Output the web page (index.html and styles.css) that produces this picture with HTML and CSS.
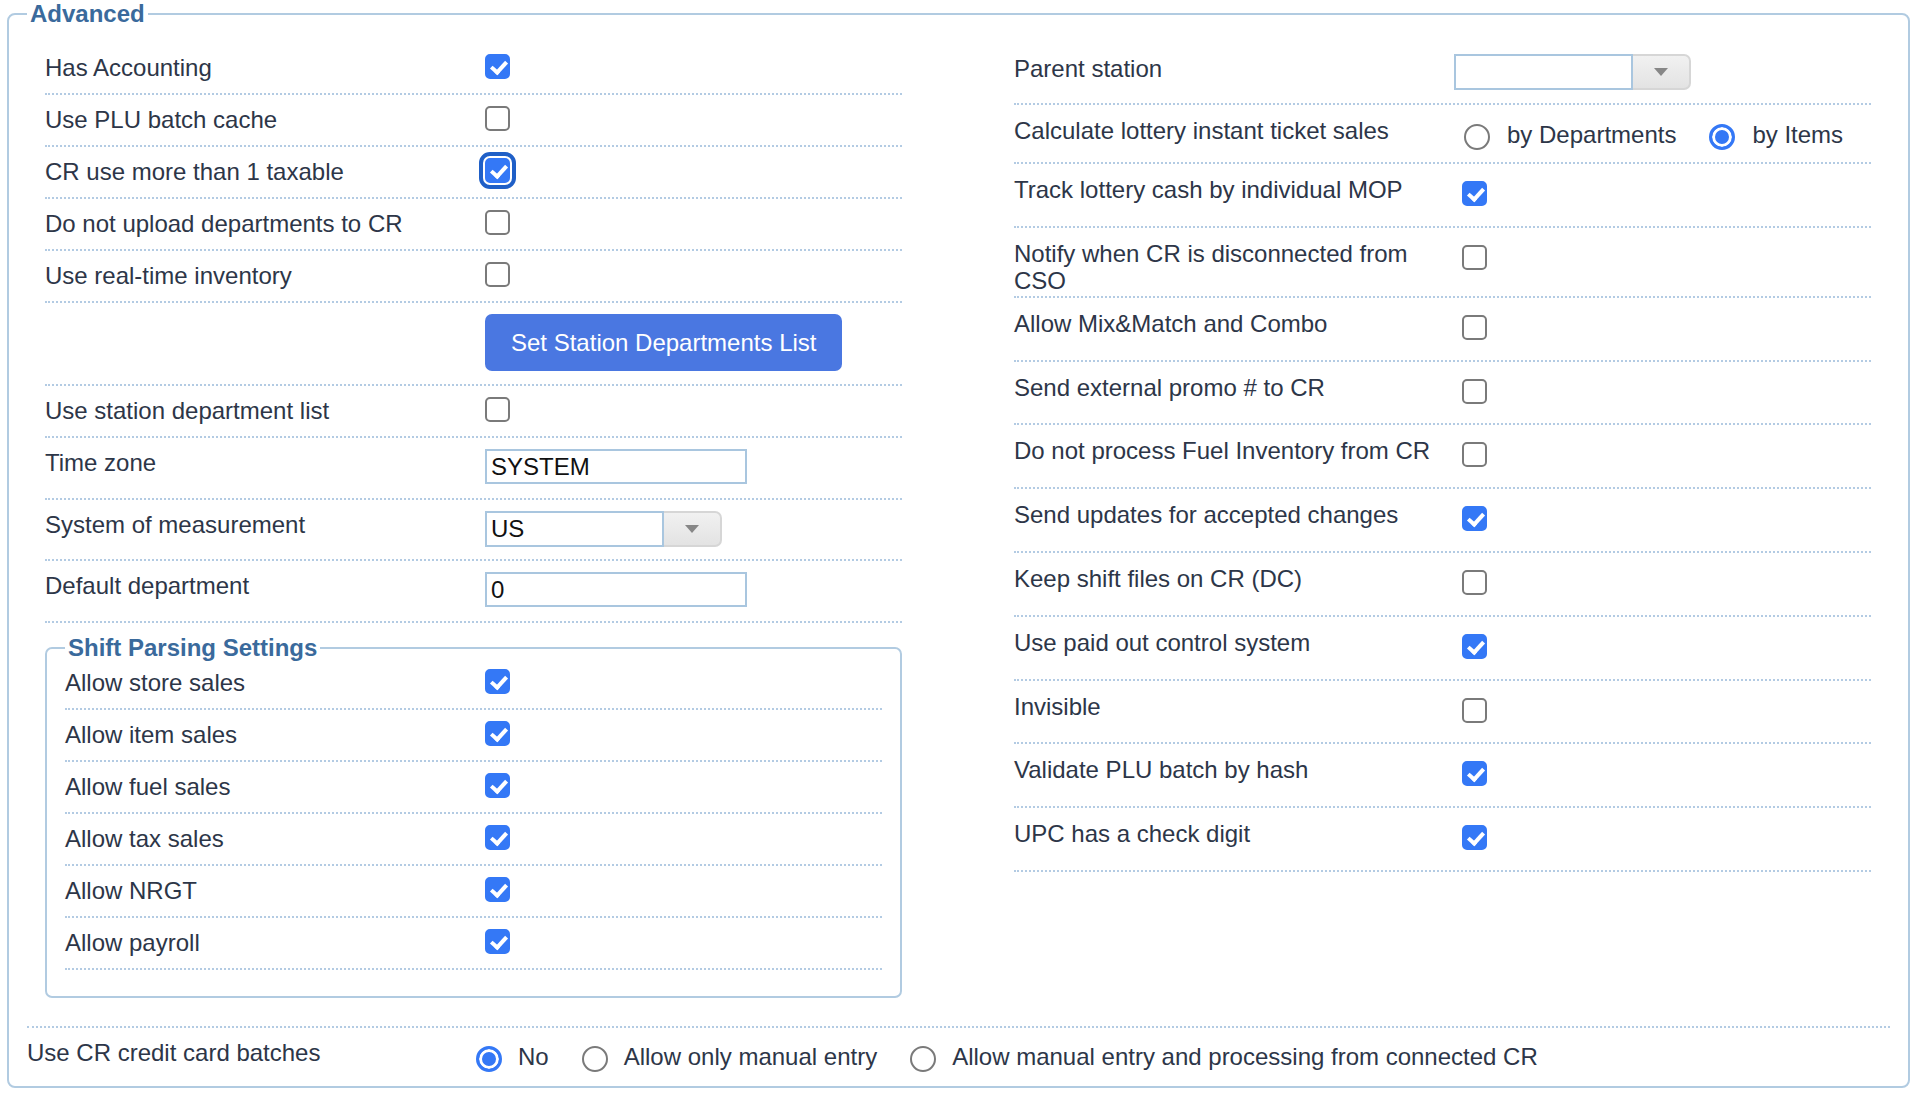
FILE: index.html
```html
<!DOCTYPE html>
<html lang="en">
<head>
<meta charset="utf-8">
<title>Advanced</title>
<link rel="stylesheet" href="styles.css">
</head>
<body>
<fieldset class="adv">
  <legend>Advanced</legend>
  <div class="cols">
    <div class="col">
      <div class="row"><span class="lbl">Has Accounting</span><input type="checkbox" class="cb" checked></div>
      <div class="row"><span class="lbl">Use PLU batch cache</span><input type="checkbox" class="cb"></div>
      <div class="row"><span class="lbl">CR use more than 1 taxable</span><input type="checkbox" class="cb focus" checked></div>
      <div class="row"><span class="lbl">Do not upload departments to CR</span><input type="checkbox" class="cb"></div>
      <div class="row"><span class="lbl">Use real-time inventory</span><input type="checkbox" class="cb"></div>
      <div class="row btnrow"><span class="lbl"></span><button class="btn" type="button">Set Station Departments List</button></div>
      <div class="row"><span class="lbl">Use station department list</span><input type="checkbox" class="cb"></div>
      <div class="row"><span class="lbl">Time zone</span><input type="text" class="txt" value="SYSTEM"></div>
      <div class="row"><span class="lbl">System of measurement</span>
        <div class="combo"><span class="combo-box">US</span><span class="combo-btn"><span class="tri"></span></span></div>
      </div>
      <div class="row"><span class="lbl">Default department</span><input type="text" class="txt" value="0"></div>

      <fieldset class="sub">
        <legend>Shift Parsing Settings</legend>
        <div class="row"><span class="lbl">Allow store sales</span><input type="checkbox" class="cb" checked></div>
        <div class="row"><span class="lbl">Allow item sales</span><input type="checkbox" class="cb" checked></div>
        <div class="row"><span class="lbl">Allow fuel sales</span><input type="checkbox" class="cb" checked></div>
        <div class="row"><span class="lbl">Allow tax sales</span><input type="checkbox" class="cb" checked></div>
        <div class="row"><span class="lbl">Allow NRGT</span><input type="checkbox" class="cb" checked></div>
        <div class="row"><span class="lbl">Allow payroll</span><input type="checkbox" class="cb" checked></div>
      </fieldset>
    </div>

    <div class="col right">
      <div class="rrow"><span class="lbl">Parent station</span>
        <div class="ctl ctl-combo"><div class="combo"><span class="combo-box"></span><span class="combo-btn"><span class="tri"></span></span></div></div>
      </div>
      <div class="rrow"><span class="lbl">Calculate lottery instant ticket sales</span>
        <div class="ctl ctl-radio">
          <label class="opt"><input type="radio" name="lot" class="rb"><span>by Departments</span></label>
          <label class="opt"><input type="radio" name="lot" class="rb" checked><span>by Items</span></label>
        </div>
      </div>
      <div class="rrow"><span class="lbl">Track lottery cash by individual MOP</span><div class="ctl"><input type="checkbox" class="cb" checked></div></div>
      <div class="rrow"><span class="lbl">Notify when CR is disconnected from CSO</span><div class="ctl"><input type="checkbox" class="cb"></div></div>
      <div class="rrow"><span class="lbl">Allow Mix&amp;Match and Combo</span><div class="ctl"><input type="checkbox" class="cb"></div></div>
      <div class="rrow"><span class="lbl">Send external promo # to CR</span><div class="ctl"><input type="checkbox" class="cb"></div></div>
      <div class="rrow"><span class="lbl">Do not process Fuel Inventory from CR</span><div class="ctl"><input type="checkbox" class="cb"></div></div>
      <div class="rrow"><span class="lbl">Send updates for accepted changes</span><div class="ctl"><input type="checkbox" class="cb" checked></div></div>
      <div class="rrow"><span class="lbl">Keep shift files on CR (DC)</span><div class="ctl"><input type="checkbox" class="cb"></div></div>
      <div class="rrow"><span class="lbl">Use paid out control system</span><div class="ctl"><input type="checkbox" class="cb" checked></div></div>
      <div class="rrow"><span class="lbl">Invisible</span><div class="ctl"><input type="checkbox" class="cb"></div></div>
      <div class="rrow"><span class="lbl">Validate PLU batch by hash</span><div class="ctl"><input type="checkbox" class="cb" checked></div></div>
      <div class="rrow"><span class="lbl">UPC has a check digit</span><div class="ctl"><input type="checkbox" class="cb" checked></div></div>
    </div>
  </div>

  <div class="brow">
    <span class="lbl">Use CR credit card batches</span>
    <div class="ctl-radio bradios">
      <label class="opt"><input type="radio" name="cc" class="rb" checked><span>No</span></label>
      <label class="opt"><input type="radio" name="cc" class="rb"><span>Allow only manual entry</span></label>
      <label class="opt"><input type="radio" name="cc" class="rb"><span>Allow manual entry and processing from connected CR</span></label>
    </div>
  </div>
</fieldset>
</body>
</html>
```

FILE: styles.css
```css
html, body {
  margin: 0;
  padding: 0;
  background: #ffffff;
}

body {
  font-family: "Liberation Sans", Arial, Helvetica, sans-serif;
  font-size: 24px;
  color: #2d3648;
}

.adv {
  margin: 4px 6px 0 7px;
  padding: 19px 18px 0 18px;
  border: 2px solid #b1cbe1;
  border-radius: 8px;
  min-width: 0;
}

legend {
  font-weight: bold;
  color: #3a6a9c;
  line-height: 20px;
  padding: 0 3px;
}

.cols {
  display: grid;
  grid-template-columns: 857px 857px;
  column-gap: 112px;
  padding: 0 19px 0 18px;
  align-items: start;
}

.row {
  display: flex;
  align-items: flex-start;
  padding: 11px 0 12px 0;
  border-bottom: 2px dotted #b3cbe3;
}

.lbl {
  flex: none;
  width: 440px;
  line-height: 27px;
}

.btnrow {
  padding: 11px 0 13px 0;
}

.sub .lbl {
  width: 420px;
}

/* checkboxes */
.cb {
  -webkit-appearance: none;
  appearance: none;
  display: block;
  position: relative;
  flex: none;
  box-sizing: border-box;
  width: 25px;
  height: 25px;
  margin: 0;
  border: 2px solid #7a7a7a;
  border-radius: 5px;
  background: #ffffff;
}

.cb:checked {
  background: #3478f6;
  border-color: #3478f6;
}

.cb:checked::after {
  content: "";
  position: absolute;
  left: 7px;
  top: 2px;
  width: 6px;
  height: 12px;
  border: solid #ffffff;
  border-width: 0 4px 4px 0;
  transform: rotate(42deg);
}

.cb.focus {
  outline: 4px solid #1f5fc7;
  outline-offset: 2px;
}

/* radios */
.rb {
  -webkit-appearance: none;
  appearance: none;
  display: block;
  flex: none;
  box-sizing: border-box;
  width: 26px;
  height: 26px;
  margin: 0;
  border: 2px solid #7a7a7a;
  border-radius: 50%;
  background: #ffffff;
}

.rb:checked {
  border: 3px solid #3478f6;
  background: #3478f6;
  box-shadow: inset 0 0 0 3px #ffffff;
}

/* button */
.btn {
  font-family: inherit;
  font-size: 24px;
  color: #ffffff;
  background: #4a77e1;
  border: none;
  border-radius: 7px;
  height: 57px;
  padding: 0 26px;
  line-height: 27px;
}

/* text inputs */
.txt {
  box-sizing: border-box;
  width: 262px;
  height: 35px;
  margin: 0 0 2px 0;
  padding: 0 4px;
  border: 2px solid #a9c6df;
  border-radius: 0;
  font-family: inherit;
  font-size: 24px;
  color: #111111;
  background: #ffffff;
}

/* combo */
.combo {
  display: flex;
  height: 36px;
}

.combo-box {
  box-sizing: border-box;
  width: 179px;
  height: 36px;
  padding: 0 4px;
  border: 2px solid #a9c6df;
  line-height: 32px;
  color: #111111;
}

.combo-btn {
  box-sizing: border-box;
  width: 58px;
  height: 36px;
  border: 2px solid #d6d6d6;
  border-left: none;
  border-radius: 0 7px 7px 0;
  background: linear-gradient(#f1f1f1, #e3e3e3);
  display: flex;
  align-items: center;
  justify-content: center;
}

.tri {
  width: 0;
  height: 0;
  border-left: 7px solid transparent;
  border-right: 7px solid transparent;
  border-top: 8px solid #878787;
}

/* sub fieldset */
.sub {
  margin: 15px 0 0 0;
  padding: 0 18px 26px 18px;
  border: 2px solid #b1cbe1;
  border-radius: 7px;
  min-width: 0;
}

/* right column */
.rrow {
  display: flex;
  align-items: flex-start;
  border-bottom: 2px dotted #b3cbe3;
}

.rrow .lbl {
  padding: 12px 0 2px 0;
}

.ctl {
  display: flex;
  align-items: flex-start;
  padding: 17px 0 19.8px 8px;
}

.ctl-combo {
  padding: 11px 0 13px 0;
}

.ctl-radio {
  display: flex;
  align-items: center;
  gap: 33px;
}

.rrow .ctl-radio {
  padding: 18px 0 12px 10px;
}

.opt {
  display: flex;
  align-items: center;
  gap: 17px;
  line-height: 27px;
  white-space: nowrap;
}

.opt span {
  position: relative;
  top: -2px;
}

/* bottom row */
.brow {
  display: flex;
  align-items: flex-start;
  margin-top: 28px;
  border-top: 2px dotted #b3cbe3;
  padding: 0 0 14px 0;
}

.brow .lbl {
  width: 449px;
  padding-top: 11px;
}

.bradios {
  padding-top: 17px;
  gap: 33px;
}

.bradios .opt {
  gap: 16px;
}
```
